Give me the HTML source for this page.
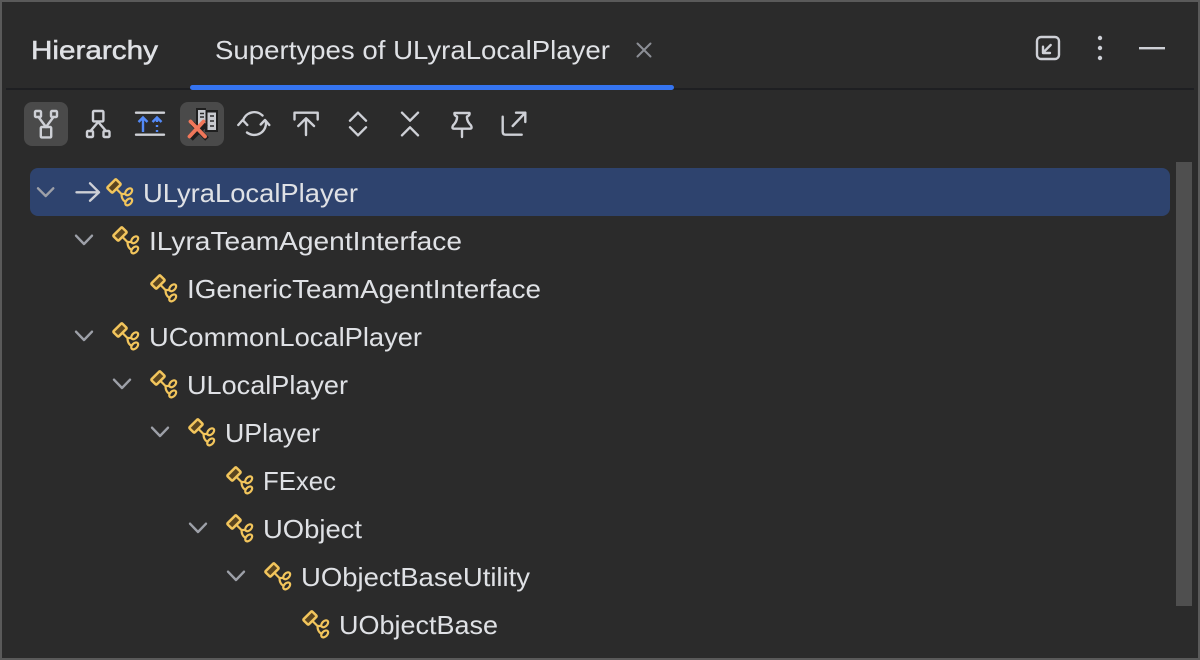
<!DOCTYPE html>
<html>
<head>
<meta charset="utf-8">
<style>
html,body{margin:0;padding:0;background:#2b2b2b;width:1200px;height:660px;overflow:hidden}
svg{display:block}
text{font-family:"Liberation Sans",sans-serif;font-size:26px;fill:#dfe1e5}
.i{fill:none;stroke:#ced0d6;stroke-width:2.4;stroke-linecap:round;stroke-linejoin:round}
.c{fill:none;stroke:#9da0a8;stroke-width:2.4;stroke-linecap:round;stroke-linejoin:round}
</style>
</head>
<body>
<svg width="1200" height="660" viewBox="0 0 1200 660" xmlns="http://www.w3.org/2000/svg">
<defs>
<g id="k">
<rect x="-6.200" y="-3.700" width="12.400" height="7.400" rx="1" transform="rotate(-45)" fill="#5a4520" stroke="#f2c55c" stroke-width="2.500"/>
<path d="M3 3.500 L7.500 8 H11.500 M7.500 8 C7.500 12 8.500 14 11 15.500" fill="none" stroke="#f2c55c" stroke-width="2.200"/>
<ellipse cx="14.700" cy="5.800" rx="4.100" ry="2.600" transform="rotate(-45 14.700 5.800)" fill="none" stroke="#f2c55c" stroke-width="2.200"/>
<ellipse cx="14.700" cy="15.900" rx="4.100" ry="2.600" transform="rotate(-45 14.700 15.900)" fill="none" stroke="#f2c55c" stroke-width="2.200"/>
</g>
</defs>

<rect x="1" y="1" width="1198" height="658" fill="#2b2b2b" stroke="#5a5a5a" stroke-width="2"/>

<!-- header -->
<rect x="6" y="88" width="1188" height="2" fill="#1e1f22"/>
<rect x="190" y="85" width="484" height="5" rx="2.500" fill="#3574f0"/>
<text x="31" y="59" textLength="127" lengthAdjust="spacingAndGlyphs" style="stroke:#dfe1e5;stroke-width:0.500">Hierarchy</text>
<text x="215" y="59" textLength="395" lengthAdjust="spacingAndGlyphs">Supertypes of ULyraLocalPlayer</text>
<path d="M637.500 43.500 L650.500 56.500 M650.500 43.500 L637.500 56.500" fill="none" stroke="#8c8f96" stroke-width="2" stroke-linecap="round"/>

<rect x="1037" y="37" width="22" height="22" rx="4" class="i"/>
<path d="M1050.700 45 L1043 52.700 M1043 46.700 V53 H1050" class="i"/>
<circle cx="1100" cy="38" r="2.200" fill="#ced0d6"/>
<circle cx="1100" cy="48" r="2.200" fill="#ced0d6"/>
<circle cx="1100" cy="58" r="2.200" fill="#ced0d6"/>
<rect x="1139" y="47" width="26" height="2.400" fill="#ced0d6"/>

<!-- toolbar -->
<rect x="24" y="102" width="44" height="44" rx="8" fill="#4a4a4a"/>
<rect x="180" y="102" width="44" height="44" rx="8" fill="#4a4a4a"/>

<rect x="35" y="111" width="6" height="6" rx="1" class="i"/>
<rect x="51" y="111" width="6" height="6" rx="1" class="i"/>
<rect x="40.800" y="127" width="10.400" height="10.400" rx="1" class="i"/>
<path d="M38.500 117 L46 127 L53.500 117" class="i"/>

<rect x="93" y="111" width="10.400" height="10.400" rx="1" class="i"/>
<rect x="87" y="131" width="6" height="6" rx="1" class="i"/>
<rect x="103.500" y="131" width="6" height="6" rx="1" class="i"/>
<path d="M90.500 131 L98.200 122 L106 131" class="i"/>

<path d="M136 112.700 H164 M136 134.700 H164" class="i"/>
<path d="M143 132 V117.500 M138.500 122 L143 117.500 L147.500 122" fill="none" stroke="#548af7" stroke-width="2.400"/>
<path d="M157 132 V130 M157 127 V125 M157 122 V117.500 M152.500 122 L157 117.500 L161.500 122" fill="none" stroke="#548af7" stroke-width="2.400"/>

<rect x="196" y="108" width="10" height="21" fill="#1f1f1f"/>
<rect x="205" y="110" width="13" height="22" fill="#1f1f1f"/>
<rect x="198" y="110" width="7.500" height="18" fill="#c8cacf"/>
<rect x="207.500" y="112.500" width="8.500" height="17.500" fill="#c8cacf"/>
<path d="M200 113.500 H204 M200 117 H204 M210 116 H214 M210 121 H214 M210 126 H214" stroke="#2b2b2b" stroke-width="1.600"/>
<path d="M191 139 L206 124 M192 123 L207 139" fill="none" stroke="#1f1f1f" stroke-width="5"/>
<path d="M189.500 136.500 L203.500 121.500 M190.500 121.500 L205 136.500" fill="none" stroke="#f0775a" stroke-width="3.800" stroke-linecap="round"/>

<path d="M243 120.500 A11.800 11.800 0 0 1 262.500 115.500 M265.800 121 A11.800 11.800 0 0 1 247 132.500" class="i"/>
<path d="M238.300 125 L242.700 120 L247.300 125 M260.700 124.500 L265 120 L269.300 125" class="i"/>

<path d="M294.500 119.500 V112.700 H317.700 V119.500 M306 135 V118.500 M298.300 126 L306 118.300 L314 126" class="i"/>

<path d="M350 120.700 L358 112.700 L366 120.700 M350 127.300 L358 135.300 L366 127.300" class="i"/>
<path d="M402 112.700 L410 120.700 L418 112.700 M402 135.300 L410 127.300 L418 135.300" class="i"/>

<path d="M454.500 113 H469.500 Q470 115.500 467 116.500 Q466.500 121 471 125.500 Q472.500 128.700 470 128.700 H454 Q451.500 128.700 453 125.500 Q457.500 121 457 116.500 Q454 115.500 454.500 113 Z M462 128.700 V137" class="i"/>

<path d="M502.700 116.700 V131.700 Q502.700 134.700 505.700 134.700 H521.700 M512.700 126 L525.300 112.700 M516 112.700 H525.300 V122" class="i"/>

<!-- selection -->
<rect x="30" y="168" width="1140" height="48" rx="8" fill="#2e436e"/>

<!-- scrollbar -->
<rect x="1176" y="162" width="16" height="444" fill="#4f4f4f"/>

<!-- row 1 -->
<path d="M38 188.300 L45.700 196 L53.300 188.300" class="c"/>
<path d="M76.500 192.300 H99 M90 183.300 L99 192.300 L90 200.700" class="i"/>
<use href="#k" x="114" y="186"/>
<text x="143" y="202" textLength="215" lengthAdjust="spacingAndGlyphs">ULyraLocalPlayer</text>

<!-- row 2 -->
<path d="M76 235.700 L84 244 L92 235.700" class="c"/>
<use href="#k" x="120" y="234"/>
<text x="149" y="250" textLength="313" lengthAdjust="spacingAndGlyphs">ILyraTeamAgentInterface</text>

<!-- row 3 -->
<use href="#k" x="158" y="282"/>
<text x="187" y="298" textLength="354" lengthAdjust="spacingAndGlyphs">IGenericTeamAgentInterface</text>

<!-- row 4 -->
<path d="M76 331.700 L84 340 L92 331.700" class="c"/>
<use href="#k" x="120" y="330"/>
<text x="149" y="346" textLength="273" lengthAdjust="spacingAndGlyphs">UCommonLocalPlayer</text>

<!-- row 5 -->
<path d="M114 379.700 L122 388 L130 379.700" class="c"/>
<use href="#k" x="158" y="378"/>
<text x="187" y="394" textLength="161" lengthAdjust="spacingAndGlyphs">ULocalPlayer</text>

<!-- row 6 -->
<path d="M152 427.700 L160 436 L168 427.700" class="c"/>
<use href="#k" x="196" y="426"/>
<text x="225" y="442" textLength="95" lengthAdjust="spacingAndGlyphs">UPlayer</text>

<!-- row 7 -->
<use href="#k" x="234" y="474"/>
<text x="263" y="490" textLength="73" lengthAdjust="spacingAndGlyphs">FExec</text>

<!-- row 8 -->
<path d="M190 523.700 L198 532 L206 523.700" class="c"/>
<use href="#k" x="234" y="522"/>
<text x="263" y="538" textLength="99" lengthAdjust="spacingAndGlyphs">UObject</text>

<!-- row 9 -->
<path d="M228 571.700 L236 580 L244 571.700" class="c"/>
<use href="#k" x="272" y="570"/>
<text x="301" y="586" textLength="229" lengthAdjust="spacingAndGlyphs">UObjectBaseUtility</text>

<!-- row 10 -->
<use href="#k" x="310" y="618"/>
<text x="339" y="634" textLength="159" lengthAdjust="spacingAndGlyphs">UObjectBase</text>
</svg>
</body>
</html>
